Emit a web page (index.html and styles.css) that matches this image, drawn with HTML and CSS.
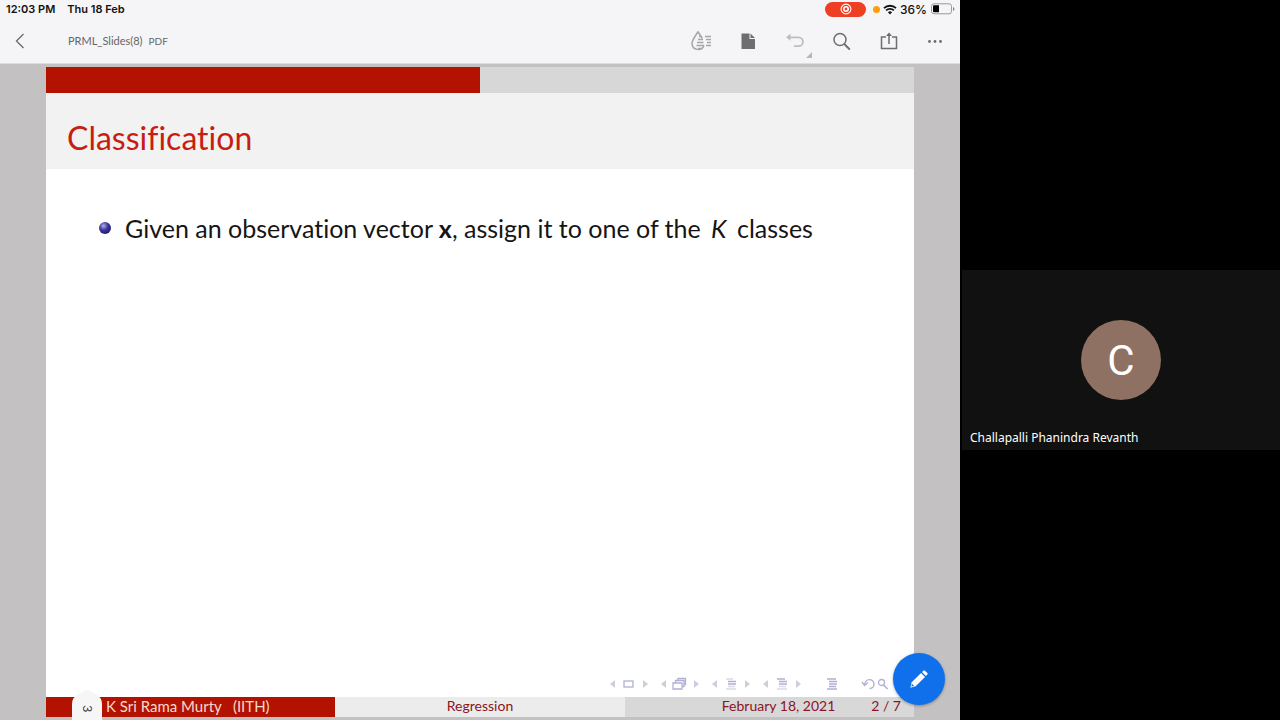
FILE: index.html
```html
<!DOCTYPE html>
<html lang="en">
<head>
<meta charset="utf-8">
<meta name="viewport" content="width=device-width, initial-scale=1">
<title>PRML_Slides(8)</title>
<link rel="stylesheet" href="styles.css">
</head>
<body>
<div class="meeting">
  <section class="tablet" aria-label="Shared screen">
    <div class="status">
      <time>12:03 PM</time>
      <span class="date">Thu 18 Feb</span>
      <div class="status-right">
        <span class="recording"><svg width="12" height="12" viewBox="0 0 12 12"><circle cx="6" cy="6" r="4.9" fill="none" stroke="#fff" stroke-width="1.1"/><circle cx="6" cy="6" r="2.2" fill="none" stroke="#fff" stroke-width="1.6"/></svg></span>
        <span class="mic-dot"></span>
        <svg class="wifi" width="14" height="11" viewBox="0 0 14 11"><path d="M1 4.2a8.6 8.6 0 0 1 12 0M3.1 6.4a5.6 5.6 0 0 1 7.8 0" fill="none" stroke="#111" stroke-width="1.8"/><path d="M4.9 8.2a3 3 0 0 1 4.2 0L7 10.4z" fill="#111"/></svg>
        <span class="percent">36%</span>
        <svg width="25" height="12" viewBox="0 0 25 12"><rect x="1.500" y=".8" width="20" height="10" rx="2.500" fill="none" stroke="#999"/><path d="M4 2.300H9V9.300H4Q3 9.300 3 8.300V3.300Q3 2.300 4 2.300z" fill="#000"/><path d="M23 4v4q1.500-.7 1.500-2T23 4z" fill="#888"/></svg>
      </div>
    </div>

    <header class="toolbar">
      <button class="tool" aria-label="Back"><svg width="20" height="20" viewBox="0 0 20 20"><path d="M13.500 3L6.500 10l7 7" fill="none" stroke="#6e6e6e" stroke-width="1.400"/></svg></button>
      <h1 class="doc-name">PRML_Slides(8)</h1>
      <span class="doc-type">PDF</span>
      <div class="tools">
        <button class="tool" aria-label="Liquid mode"><svg width="22" height="22" viewBox="0 0 22 22" fill="none" stroke="#a6a6a6" stroke-width="1.500"><path d="M8 1.500C6.500 5 2 9.300 2 13.600a6.200 6.200 0 0 0 12 1.800M8 1.500c.7 1.600 2.500 4 4.300 6.800M9 6.500h3M8 9.500h5M7 12.500h6.500M6.500 15.500h7.500M8 18.500h4M15 6.500h6M16 9.500h5M17 12.500h4M16 15.500h5"/></svg></button>
        <button class="tool" aria-label="View settings"><svg width="20" height="20" viewBox="0 0 20 20" fill="#6e6e6e"><path d="M3.500 2.500h8v5.500h5.500V18H3.500z"/><path d="M12.500 2.500L17 7h-4.500z"/></svg></button>
        <button class="tool tool-more" aria-label="Undo"><svg width="20" height="20" viewBox="0 0 20 20"><path d="M3 6.300h10.500a4.400 4.400 0 0 1 0 8.800H9" fill="none" stroke="#bdbdbd" stroke-width="1.800"/><path d="M1 6.300L5.500 2.800v7z" fill="#bdbdbd"/></svg></button>
        <button class="tool" aria-label="Search"><svg width="20" height="20" viewBox="0 0 20 20" fill="none" stroke="#6e6e6e" stroke-width="1.500"><circle cx="8" cy="8.500" r="6"/><path d="M12.300 13l5.500 5.500" stroke-width="1.900"/></svg></button>
        <button class="tool" aria-label="Share"><svg width="20" height="20" viewBox="0 0 20 20"><path d="M7 6H2.500v11.500h15V6H13M10 13V3" fill="none" stroke="#6e6e6e" stroke-width="1.500"/><path d="M10 1.500l3 3.500H7z" fill="#6e6e6e"/></svg></button>
        <button class="tool" aria-label="More options"><svg width="20" height="20" viewBox="0 0 20 20" fill="#6e6e6e"><circle cx="3.500" cy="10.500" r="1.400"/><circle cx="9" cy="10.500" r="1.400"/><circle cx="14.500" cy="10.500" r="1.400"/></svg></button>
      </div>
    </header>

    <main class="viewer">
      <article class="slide">
        <div class="progress"></div>
        <h2 class="slide-title">Classification</h2>
        <div class="slide-body">
          <ul class="points">
            <li><span class="ball"></span><span>Given an observation vector <b>x</b>, assign it to one of the <i>K</i> classes</span></li>
          </ul>
          <nav class="beamer-nav" aria-label="Slide navigation">
            <div class="nav-group">
              <button aria-label="Previous slide"><svg width="5" height="8" viewBox="0 0 5 8"><path d="M5 0v8L0 4z"/></svg></button>
              <svg width="16" height="14" viewBox="0 0 16 14" class="line"><rect x="3" y="4" width="9" height="6"/></svg>
              <button aria-label="Next slide"><svg width="5" height="8" viewBox="0 0 5 8"><path d="M0 0v8l5-4z"/></svg></button>
            </div>
            <div class="nav-group">
              <button aria-label="Previous frame"><svg width="5" height="8" viewBox="0 0 5 8"><path d="M5 0v8L0 4z"/></svg></button>
              <svg width="16" height="14" viewBox="0 0 16 14" class="line"><path d="M1 6h9v6H1zM3.500 6V3.500h8.500V9.500h-2M6 3.500V1.500h7.500v6h-1.500"/></svg>
              <button aria-label="Next frame"><svg width="5" height="8" viewBox="0 0 5 8"><path d="M0 0v8l5-4z"/></svg></button>
            </div>
            <div class="nav-group">
              <button aria-label="Previous subsection"><svg width="5" height="8" viewBox="0 0 5 8"><path d="M5 0v8L0 4z"/></svg></button>
              <svg width="16" height="14" viewBox="0 0 16 14" class="line"><path d="M5 4.500h8M5 7h8"/><path class="faint" d="M3 2h7M5 9.500h7M3 12h10"/></svg>
              <button aria-label="Next subsection"><svg width="5" height="8" viewBox="0 0 5 8"><path d="M0 0v8l5-4z"/></svg></button>
            </div>
            <div class="nav-group">
              <button aria-label="Previous section"><svg width="5" height="8" viewBox="0 0 5 8"><path d="M5 0v8L0 4z"/></svg></button>
              <svg width="16" height="14" viewBox="0 0 16 14" class="line"><path d="M3 2h8M5 4.500h8M5 7h8"/><path class="faint" d="M5 9.500h7M3 12h10"/></svg>
              <button aria-label="Next section"><svg width="5" height="8" viewBox="0 0 5 8"><path d="M0 0v8l5-4z"/></svg></button>
            </div>
            <svg class="outline line" width="16" height="14" viewBox="0 0 16 14"><path d="M2 2h9M4 4.500h8M4 7h8M4 9.500h7M2 12h10"/></svg>
            <div class="nav-tail">
              <button aria-label="Go back"><svg class="line" width="14" height="14" viewBox="0 0 14 14"><path d="M1 5l2.500 3.500 3.500-3M3.500 8.500c.5-8 9.500-7 9.500-1.500 0 3-2 4.500-4.500 4.500"/></svg></button>
              <button aria-label="Find"><svg class="line" width="12" height="14" viewBox="0 0 12 14"><circle cx="4.500" cy="5.500" r="3"/><path d="M6.500 8l4 4" stroke-width="1.600"/></svg></button>
            </div>
          </nav>
        </div>
        <footer class="slide-foot">
          <span class="author">K Sri Rama Murty&nbsp;&nbsp; (IITH)</span>
          <span class="subject">Regression</span>
          <span class="when"><span>February 18, 2021</span><span>2 / 7</span></span>
        </footer>
      </article>
      <div class="page-tab"><svg class="tab-shape" width="30" height="30" viewBox="0 0 30 30"><path d="M0 30V14Q0 8 5 5L12 1Q15-.5 18 1l7 4q5 3 5 9v16z" fill="#f7f6f7"/></svg><span>3</span></div>
      <button class="fab" aria-label="Edit"><svg width="20" height="20" viewBox="0 0 22 22" fill="#fff"><path d="M1.500 20.500l1.500-5.800L13.300 4.400l4.300 4.300L7.300 19z"/><path d="M14.300 3.400l1.600-1.600q.8-.8 1.600 0l2.700 2.700q.8.800 0 1.600l-1.600 1.600z"/><path d="M3.300 16.300l2.300 2.300-2.900.7z" fill="#1070ec"/></svg></button>
    </main>
  </section>

  <aside class="people">
    <div class="tile">
      <span class="avatar">C</span>
      <span class="name">Challapalli Phanindra Revanth</span>
    </div>
  </aside>
</div>
</body>
</html>
```
FILE: styles.css
```css
* { box-sizing: border-box; }
body { margin: 0; background: #000; }
button { border: 0; padding: 0; background: none; display: flex; align-items: center; justify-content: center; cursor: pointer; }
svg { display: block; flex: none; }

.meeting { display: grid; grid-template-columns: 3fr 1fr; min-height: 100vh; }

.tablet { display: flex; flex-direction: column; background: #f5f4f6; font-family: Inter, "Liberation Sans", sans-serif; }
.status { display: flex; align-items: center; height: 18px; padding: 0 5px 0 6px; gap: 12px; font-size: 11px; font-weight: 600; color: #111; }
.status-right { display: flex; align-items: center; gap: 3px; margin-left: auto; font-size: 12px; font-weight: 500; }
.recording { display: flex; align-items: center; justify-content: center; width: 41px; height: 15px; margin-right: 4px; border-radius: 8px; background: #ee3f24; }
.mic-dot { width: 7px; height: 7px; border-radius: 50%; background: #ff9d0a; }

.toolbar { display: flex; align-items: center; height: 46px; padding: 0 14px 0 10px; border-bottom: 1px solid #dcdbdd; color: #666; font-family: Lato, "Noto Sans", sans-serif; }
.tool { width: 20px; height: 20px; }
.doc-name { margin: 0 6px 0 38px; font-size: 11px; font-weight: 400; }
.doc-type { font-size: 10px; }
.tools { display: flex; gap: 27px; margin-left: auto; }
.tool-more { position: relative; }
.tool-more::after { content: ""; position: absolute; right: -7px; bottom: -7px; border: 3px solid transparent; border-right-color: #b8b8b8; border-bottom-color: #b8b8b8; }

.viewer { position: relative; flex: 1; display: flex; padding: 3px 46px; background: #c3c1c2; overflow: hidden; }
.slide { flex: 1; display: flex; flex-direction: column; background: #fff; font-family: Lato, "Noto Sans", sans-serif; font-variant-ligatures: none; }
.progress { height: 26px; background: linear-gradient(90deg, #b31200 50%, #d8d7d8 50%); }
.slide-title { display: flex; align-items: center; height: 76px; margin: 0; padding: 14px 21px 0; background: #f3f2f3; color: #c81e12; font-size: 32px; line-height: 40px; font-weight: 400; }
.slide-body { flex: 1; display: flex; flex-direction: column; justify-content: space-between; padding: 42px 25px 6px 53px; }
.points { margin: 0; padding: 0; list-style: none; font-size: 25px; line-height: 34px; color: #151515; }
.points li { display: flex; align-items: center; gap: 14px; }
.points i { margin: 0 4px; }
.ball { flex: none; width: 12px; height: 12px; border-radius: 50%; background: radial-gradient(circle at 38% 32%, #b0b0e0, #3b34a0 40%, #1b1560 85%); }

.beamer-nav { display: flex; align-items: center; align-self: flex-end; fill: #cfcfdc; }
.nav-group { display: flex; align-items: center; gap: 6px; margin-right: 13px; }
.line { fill: none; stroke: #b0b0d4; stroke-width: 1.3; }
.faint { stroke: #dadae8; }
.outline { margin: 0 20px 0 11px; }
.nav-tail { display: flex; gap: 2px; }

.slide-foot { display: grid; grid-template-columns: 1fr 1fr 1fr; font-size: 14px; line-height: 18px; color: #8c1420; }
.slide-foot > span { padding-bottom: 2px; }
.slide-foot .author { padding-left: 60px; background: #b31200; color: #f6d9cf; font-size: 15px; }
.subject { text-align: center; background: #ececec; }
.slide-foot .when { display: flex; justify-content: flex-end; gap: 36px; padding-right: 13px; background: #d9d8d9; }

.page-tab { position: absolute; left: 72px; bottom: 0; display: grid; place-items: center; width: 30px; height: 30px; color: #444; font-size: 12px; }
.page-tab > * { grid-area: 1 / 1; }
.page-tab span { z-index: 1; padding-top: 7px; writing-mode: vertical-rl; }
.fab { position: absolute; right: 15px; bottom: 15px; width: 52px; height: 52px; border-radius: 50%; background: #1070ec; box-shadow: 0 1px 3px #0005; }

.people { display: flex; flex-direction: column; justify-content: center; padding-left: 2px; background: #000; }
.tile { display: grid; grid-template-rows: 1fr auto 1fr; aspect-ratio: 318 / 180; padding: 0 8px; background: #111; color: #fff; font-family: "Noto Sans", sans-serif; }
.avatar { grid-row: 2; justify-self: center; display: flex; align-items: center; justify-content: center; width: 80px; height: 80px; border-radius: 50%; background: #8f7163; font: 42px Roboto, sans-serif; }
.name { grid-row: 3; align-self: end; font-size: 12px; line-height: 16px; padding-bottom: 4px; }
```
